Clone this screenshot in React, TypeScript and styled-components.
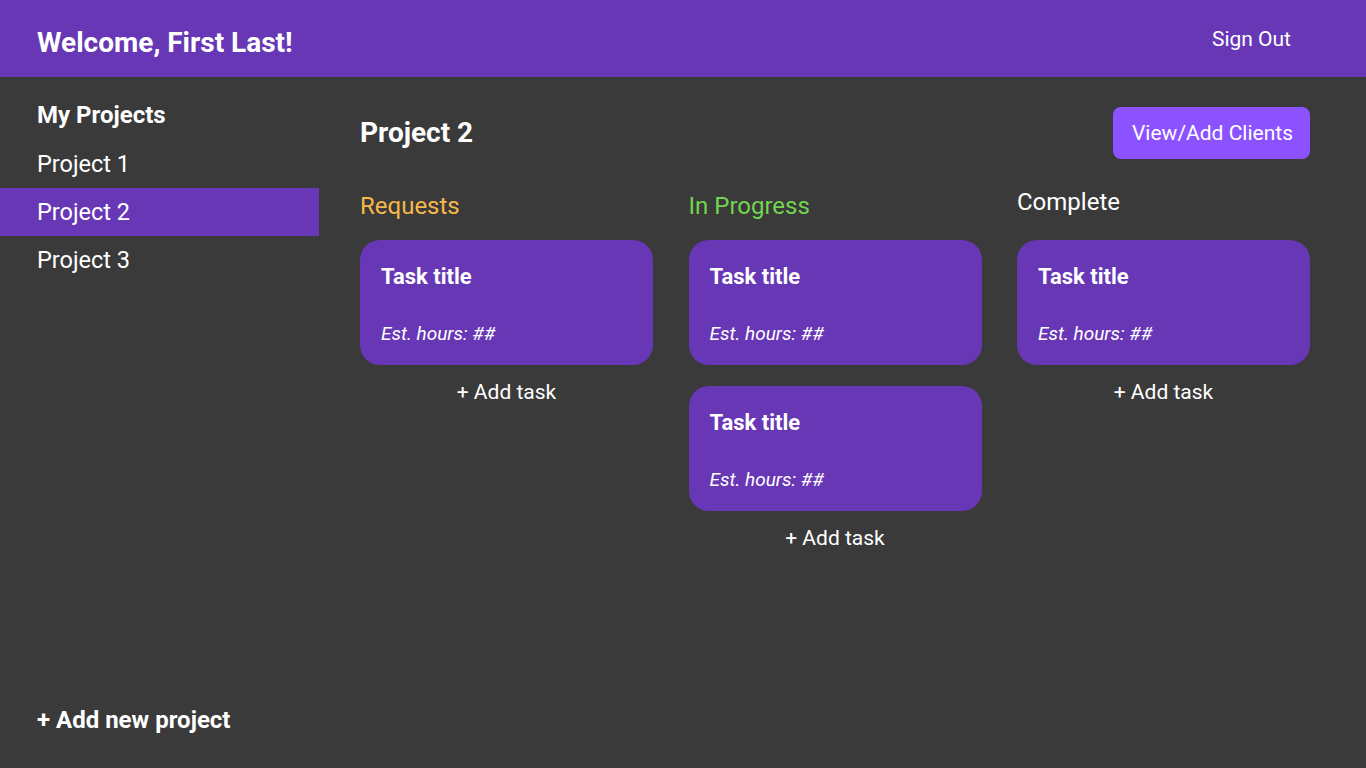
import React from "react";
import styled, { createGlobalStyle } from "styled-components";

const GlobalStyle = createGlobalStyle`
  html, body { margin: 0; padding: 0; background: #3a3a3a; }
  body { font-family: Roboto, "Noto Sans", sans-serif; color: #ffffff; }
  * { box-sizing: border-box; }
`;

const Page = styled.div`
  display: flex;
  flex-direction: column;
  width: 1366px;
  height: 768px;
  background: #3a3a3a;
  overflow: hidden;
`;

const Header = styled.header`
  height: 77px;
  flex: none;
  background: #6737b5;
  display: flex;
  align-items: center;
  justify-content: space-between;
  padding: 0 75px 0 37px;
`;

const Welcome = styled.h1`
  margin: 8px 0 0;
  font-size: 28px;
  font-weight: 700;
  line-height: 32px;
`;

const SignOut = styled.span`
  font-size: 21px;
  font-weight: 400;
  line-height: 24px;
`;

const Body = styled.div`
  flex: 1;
  display: flex;
  min-height: 0;
`;

const Sidebar = styled.nav`
  width: 319px;
  flex: none;
  display: flex;
  flex-direction: column;
`;

const SideHeading = styled.h2`
  margin: 24px 0 11px;
  padding-left: 37px;
  font-size: 24px;
  font-weight: 700;
  line-height: 28px;
`;

const ProjectItem = styled.div<{ $active?: boolean }>`
  height: 48px;
  display: flex;
  align-items: center;
  padding-left: 37px;
  font-size: 23.5px;
  background: ${(p) => (p.$active ? "#6737b5" : "transparent")};
`;

const AddProject = styled.div`
  margin-top: auto;
  padding: 0 0 34px 37px;
  font-size: 24px;
  font-weight: 700;
  line-height: 28px;
`;

const Main = styled.main`
  flex: 1;
  padding: 30px 56px 0 41px;
  display: flex;
  flex-direction: column;
`;

const TitleRow = styled.div`
  height: 52px;
  display: flex;
  align-items: center;
  justify-content: space-between;
`;

const ProjectTitle = styled.h2`
  margin: 0 0 2px;
  font-size: 28px;
  font-weight: 700;
`;

const ClientsButton = styled.button`
  height: 52px;
  width: 197px;
  border: none;
  border-radius: 8px;
  background: #8c52ff;
  color: #ffffff;
  font-family: Roboto, sans-serif;
  font-size: 21px;
  padding: 0 0 0 2px;
  text-align: center;
`;

const Board = styled.div`
  margin-top: 34px;
  display: grid;
  grid-template-columns: repeat(3, 293px);
  column-gap: 35.5px;
  align-items: start;
`;

const Column = styled.section`
  display: flex;
  flex-direction: column;
`;

const ColumnTitle = styled.h3<{ $color: string; $shift?: number }>`
  margin: ${(p) => -(p.$shift || 0)}px 0 ${(p) => 21 + (p.$shift || 0)}px;
  font-size: 24px;
  font-weight: 400;
  line-height: 26px;
  color: ${(p) => p.$color};
`;

const Cards = styled.div`
  display: flex;
  flex-direction: column;
  gap: 21px;
`;

const Card = styled.div`
  height: 125px;
  background: #6737b5;
  border-radius: 20px;
  padding: 25px 21px 0;
`;

const CardTitle = styled.div`
  font-size: 22px;
  font-weight: 700;
  line-height: 24px;
`;

const CardHours = styled.div`
  margin-top: 34px;
  font-size: 19px;
  font-style: italic;
  line-height: 22px;
`;

const AddTask = styled.div`
  margin-top: 15px;
  text-align: center;
  font-size: 21px;
  line-height: 24px;
`;

const columns = [
  { title: "Requests", color: "#f7b84b", count: 1, shift: 0 },
  { title: "In Progress", color: "#72d44f", count: 2, shift: 0 },
  { title: "Complete", color: "#ffffff", count: 1, shift: 4 },
];

export default function App() {
  return (
    <Page>
      <GlobalStyle />
      <Header>
        <Welcome>Welcome, First Last!</Welcome>
        <SignOut>Sign Out</SignOut>
      </Header>
      <Body>
        <Sidebar>
          <SideHeading>My Projects</SideHeading>
          <ProjectItem>Project 1</ProjectItem>
          <ProjectItem $active>Project 2</ProjectItem>
          <ProjectItem>Project 3</ProjectItem>
          <AddProject>+ Add new project</AddProject>
        </Sidebar>
        <Main>
          <TitleRow>
            <ProjectTitle>Project 2</ProjectTitle>
            <ClientsButton>View/Add Clients</ClientsButton>
          </TitleRow>
          <Board>
            {columns.map((c) => (
              <Column key={c.title}>
                <ColumnTitle $color={c.color} $shift={c.shift}>
                  {c.title}
                </ColumnTitle>
                <Cards>
                  {Array.from({ length: c.count }).map((_, i) => (
                    <Card key={i}>
                      <CardTitle>Task title</CardTitle>
                      <CardHours>Est. hours: ##</CardHours>
                    </Card>
                  ))}
                </Cards>
                <AddTask>+ Add task</AddTask>
              </Column>
            ))}
          </Board>
        </Main>
      </Body>
    </Page>
  );
}
